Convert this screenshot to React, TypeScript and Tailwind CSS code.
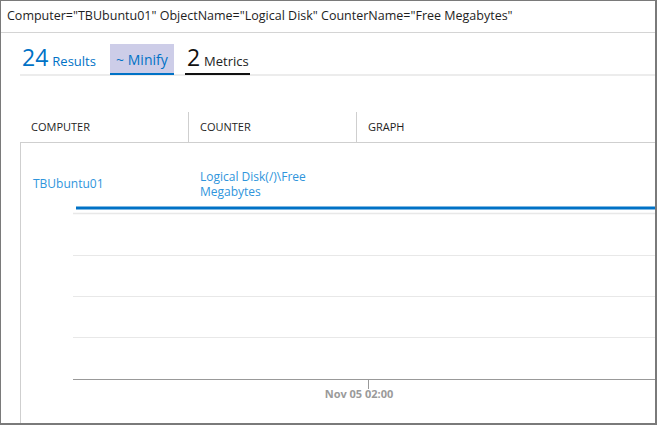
import React from "react";

const font = { fontFamily: '"Open Sans", "Noto Sans", sans-serif' };

export default function App() {
  return (
    <div
      className="w-[657px] h-[425px] bg-white border-l border-t border-r-2 border-b-2 border-[#7a7a7a] overflow-hidden flex flex-col"
      style={font}
    >
      <div className="h-[32px] shrink-0 flex items-center pl-[6px] text-[12.5px] text-[#1e1e1e] border-b border-[#d4d4d4]">
        Computer="TBUbuntu01" ObjectName="Logical Disk" CounterName="Free Megabytes"
      </div>

      <div className="ml-[19px] mt-[11px] h-[32px] shrink-0 flex items-end border-b-2 border-[#ececec]">
        <div className="h-[31px] -mb-[1px] flex items-center pt-[1px] pl-[2px] pr-[3px] border-b-2 border-transparent">
          <span className="flex items-baseline">
            <span className="text-[23px] leading-none text-[#0072c6]">24</span>
            <span className="ml-[4px] text-[13px] text-[#0072c6]">Results</span>
          </span>
        </div>
        <div className="ml-[11px] h-[31px] -mb-[1px] w-[64px] flex items-center justify-center pt-[1px] bg-[#cdcde8] border-b-2 border-[#0072c6] text-[14px] text-[#0072c6]">
          ~ Minify
        </div>
        <div className="ml-[11px] h-[31px] -mb-[1px] w-[65px] flex items-center pt-[1px] pl-[2px] border-b-2 border-[#111]">
          <span className="flex items-baseline">
            <span className="text-[23px] leading-none text-[#111]">2</span>
            <span className="ml-[4px] text-[13px] text-[#222]">Metrics</span>
          </span>
        </div>
      </div>

      <div className="ml-[19px] mt-[36px] h-[31px] shrink-0 flex border-b border-[#cfcfcf] text-[11px] text-[#1e1e1e]">
        <div className="w-[169px] flex items-center pl-[11px] border-r border-[#cfcfcf]">COMPUTER</div>
        <div className="w-[168px] flex items-center pl-[11px] border-r border-[#cfcfcf]">COUNTER</div>
        <div className="flex items-center pl-[11px]">GRAPH</div>
      </div>

      <div className="ml-[19px] flex-1 border-l border-[#cfcfcf] flex flex-col">
        <div className="h-[57px] shrink-0 flex items-center pt-[25px] text-[12px] text-[#2f95dc]">
          <div className="w-[168px] pl-[12px]">TBUbuntu01</div>
          <div className="w-[168px] pl-[11px] leading-[15px] flex flex-col">
            <span>Logical Disk(/)\Free</span>
            <span>Megabytes</span>
          </div>
        </div>
        <svg width="636" height="223" className="block shrink-0">
          <line x1="52" x2="636" y1="13.5" y2="13.5" stroke="#e8e8e8" strokeWidth="1.5" />
          <line x1="52" x2="636" y1="55.5" y2="55.5" stroke="#e8e8e8" strokeWidth="1" />
          <line x1="52" x2="636" y1="96.5" y2="96.5" stroke="#e8e8e8" strokeWidth="1" />
          <line x1="52" x2="636" y1="137.5" y2="137.5" stroke="#e8e8e8" strokeWidth="1" />
          <line x1="55" x2="636" y1="8" y2="8" stroke="#0072c6" strokeWidth="3" />
          <line x1="52" x2="636" y1="179.5" y2="179.5" stroke="#999999" strokeWidth="1" />
          <line x1="347.5" x2="347.5" y1="179.5" y2="189" stroke="#999999" strokeWidth="1" />
          <text
            x="338"
            y="198"
            textAnchor="middle"
            fontSize="11"
            fontWeight="700"
            fill="#9a9a9a"
            style={font}
          >
            Nov 05 02:00
          </text>
        </svg>
      </div>
    </div>
  );
}
